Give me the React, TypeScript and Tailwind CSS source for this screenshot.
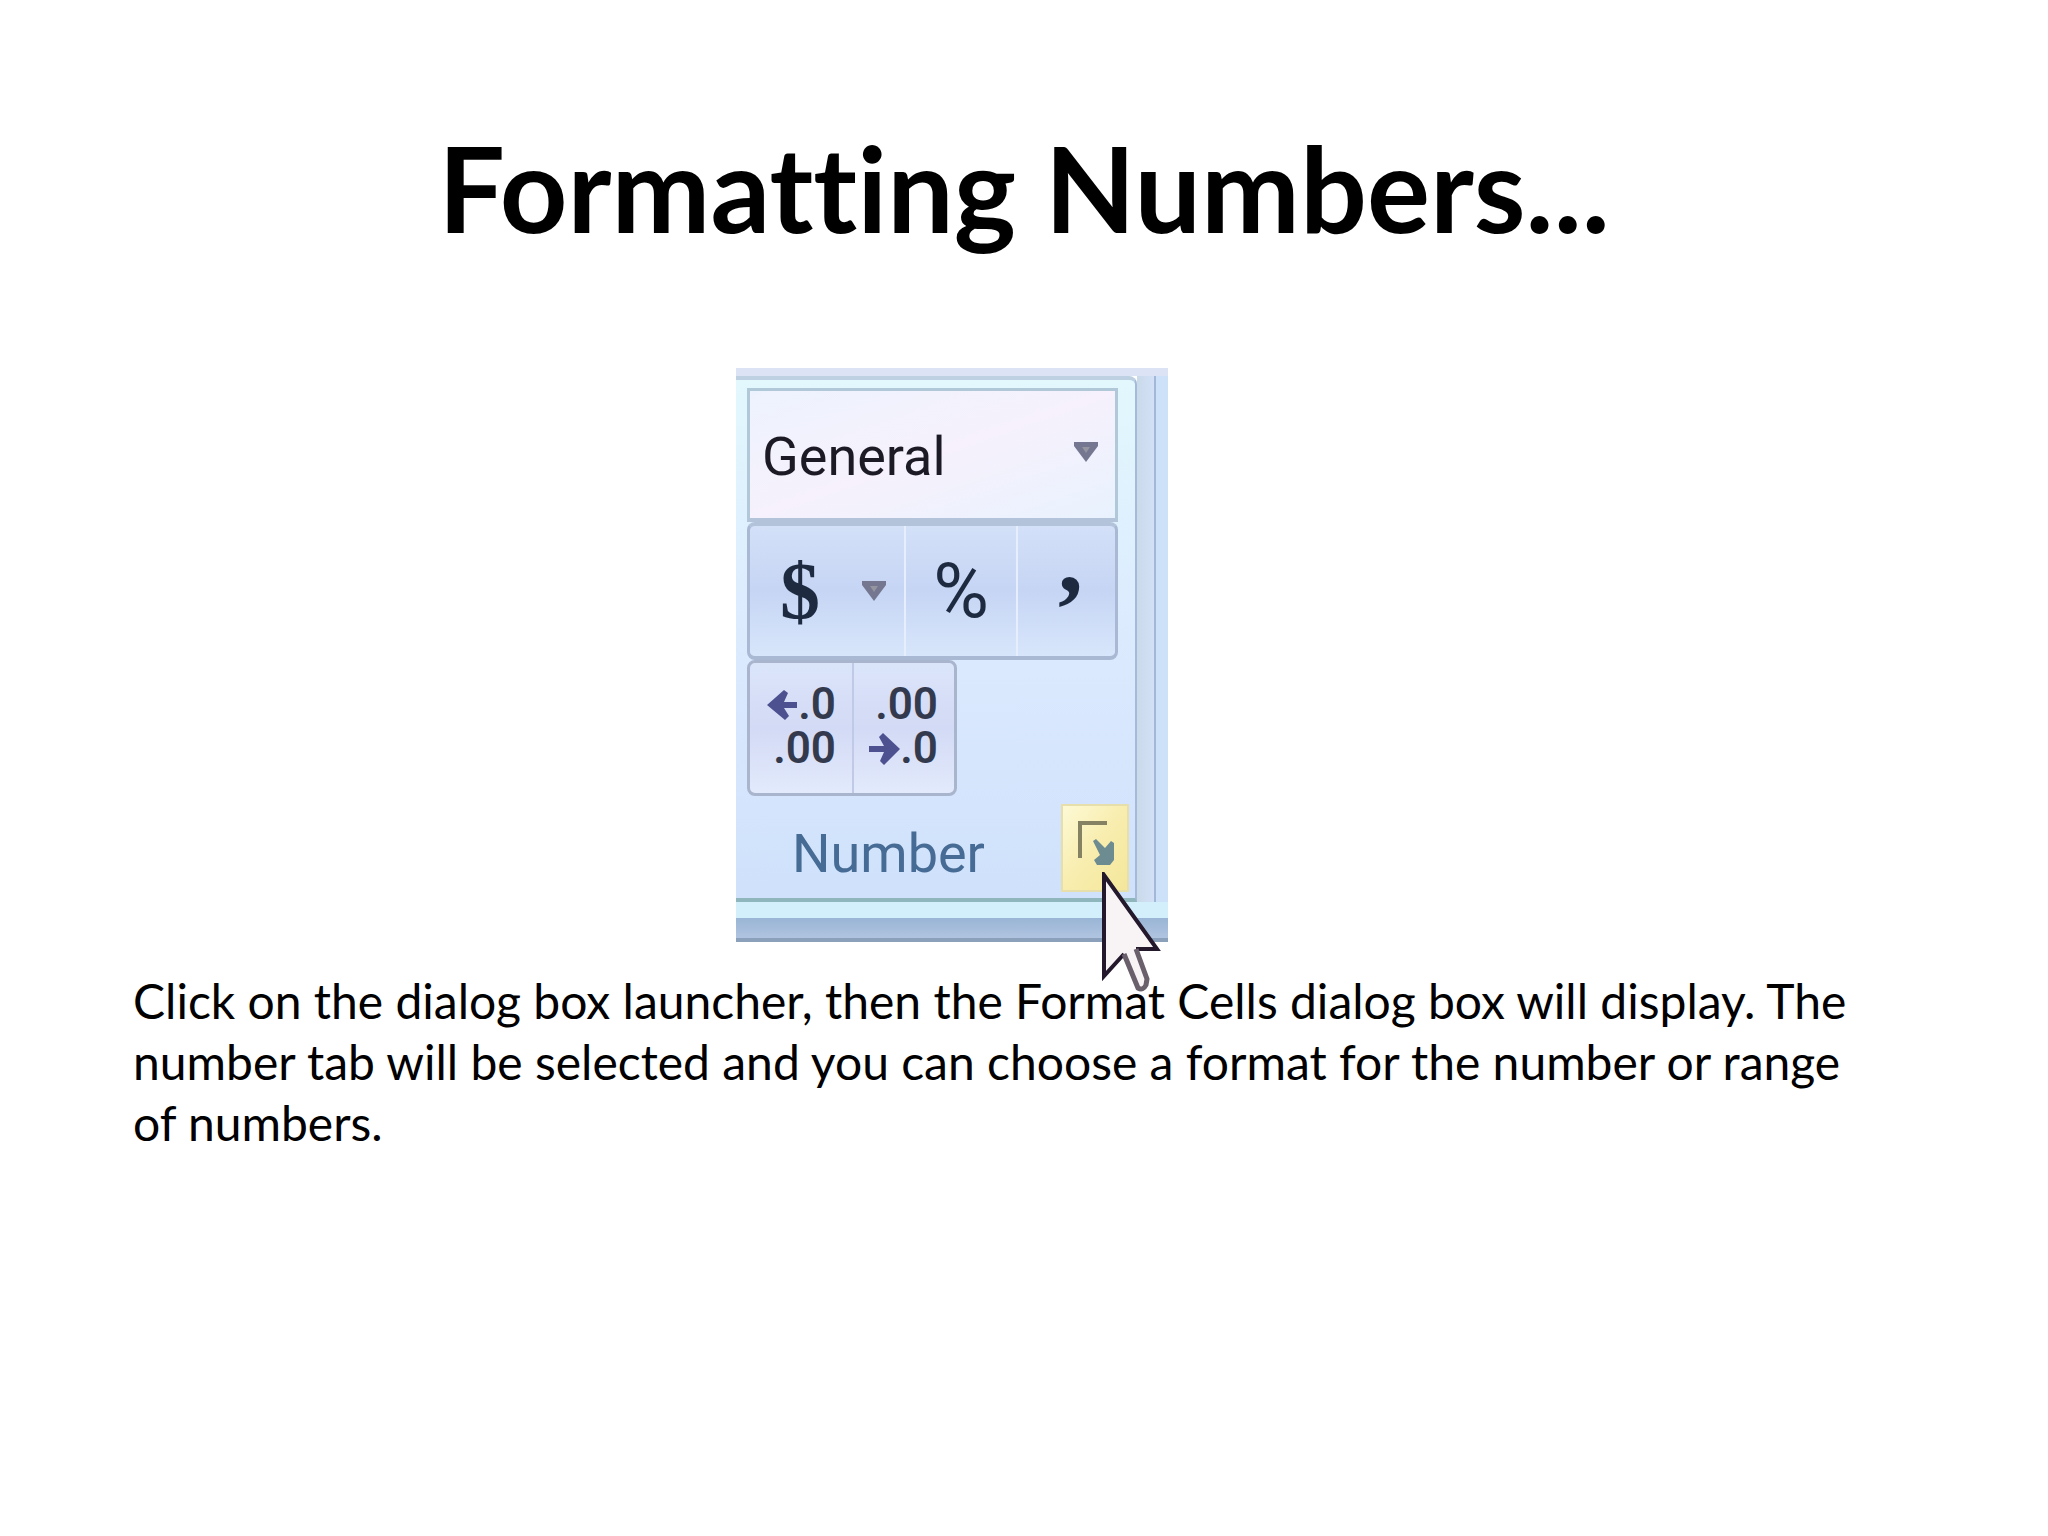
import { useState } from "react";

const FORMATS = ["General", "Number", "Currency", "Accounting", "Percentage"];

function Arrow({ className }: { className: string }) {
  return (
    <svg viewBox="0 0 24 20" className={className} aria-hidden="true">
      <path d="M0 0h24v4l-12 16L0 4z" fill="#74778f" />
      <path d="M8 5h8l-4 6z" fill="#94959f" />
    </svg>
  );
}

function SmallArrow({ left }: { left?: boolean }) {
  return (
    <svg viewBox="0 0 32 38" className="w-8 h-[38px]" aria-hidden="true">
      {left
        ? <path d="M1 20L18 5l4 3-4 9h13v6H18l5 8-4 4z" fill="#4d5190" />
        : <path d="M32 20L16 36l-4-4 4-9H1v-6h15l-5-9 4-4z" fill="#4d5190" />}
    </svg>
  );
}

function Cursor() {
  return (
    <svg viewBox="0 0 60 122" className="absolute left-[38px] top-[66px] w-[60px] h-[122px] pointer-events-none" aria-hidden="true">
      <path d="M3 3v101l20-22 14 34q5 3 8-3l1-6-11-30h21z" fill="#f8f4f6" />
      <path d="M35 77h21L3 3v101l20-22" fill="none" stroke="#24182c" strokeWidth="4" />
      <path d="M23 82l14 34q5 3 8-3l1-6-11-30" fill="none" stroke="#6a606c" strokeWidth="5" />
    </svg>
  );
}

function NumberGroup() {
  const [format, setFormat] = useState("General");

  return (
    <section aria-label="Number" className="w-[432px] font-[Roboto,sans-serif]">
      <div className="h-2 bg-[#dce3f5]" />
      <div className="flex">
        <div className="flex-1 border-t-4 border-r-2 border-b-4 border-t-[#bdd1e2] border-r-[#a5b9d8] border-b-[#8fb5bd] rounded-tr-lg bg-linear-to-b from-[#e2f8fd] via-[#dceafe] to-[#cfe1fb]">
          <div className="flex flex-col pl-[11px] pr-[17px] pt-2">
            <div className="relative h-[134px]">
              <select aria-label="Number format" value={format} onChange={(e) => setFormat(e.target.value)} className="appearance-none w-full h-full pl-3 pt-1 border-3 border-b-4 border-[#b0c8d8] border-b-[#b3c3da] bg-linear-to-br from-[#edf3fe] via-[#f6f1fc] to-[#e8f2fe] text-[54px] text-[#1c1b25]">
                {FORMATS.map((f) => <option key={f}>{f}</option>)}
              </select>
              <Arrow className="absolute right-5 top-[54px] w-6 h-5 pointer-events-none" />
            </div>
            <div className="flex h-[138px] border-3 border-t-4 border-b-4 border-[#a9b8d3] border-t-[#b3c3da] rounded-lg bg-linear-to-b from-[#d3e0f8] via-[#c6d5f4] to-[#d8e6fb] text-[#1d2a40]">
              <button aria-label="Accounting format" className="w-[156px] flex items-center gap-[42px] pl-[30px] border-r-2 border-[#e6eefb]">
                <span className="font-['Liberation_Serif',serif] font-bold text-[80px] leading-[96px]">$</span>
                <Arrow className="w-6 h-5" />
              </button>
              <button aria-label="Percent style" className="w-[112px] border-r-2 border-[#e6eefb] text-[76px] leading-[96px]">%</button>
              <button aria-label="Comma style" className="flex-1 flex items-start justify-center pb-16 pl-2 font-['Liberation_Serif',serif] font-bold text-[100px] leading-[66px]">,</button>
            </div>
            <div className="flex w-[210px] h-[136px] border-3 border-[#a9b4cd] rounded-lg bg-linear-to-b from-[#dbe5fa] via-[#d3daf5] to-[#e2eafc] text-[44px] leading-[44px] font-semibold text-[#343a4e]">
              <button aria-label="Increase decimal" className="w-[104px] border-r-2 border-[#c0cae6] flex flex-col items-end justify-center pr-4 pb-1">
                <span className="flex items-center"><SmallArrow left />.0</span>
                <span>.00</span>
              </button>
              <button aria-label="Decrease decimal" className="flex-1 flex flex-col items-end justify-center pr-4 pb-1">
                <span>.00</span>
                <span className="flex items-center"><SmallArrow />.0</span>
              </button>
            </div>
          </div>
          <div className="flex justify-between mt-2 h-[94px] pl-[56px] pr-[6px]">
            <span className="text-[54px] leading-[100px] text-[#466b94]">Number</span>
            <button aria-label="Format Cells" className="relative w-[68px] h-[88px] border-2 border-[#e6dfac] bg-linear-to-br from-[#fdf9d5] via-[#f8edae] to-[#f4e79b] z-10">
              <svg viewBox="0 0 68 88" className="absolute -left-[2px] -top-[2px] w-[68px] h-[88px]" aria-hidden="true">
                <path d="M19 54V19h27" fill="none" stroke="#858163" strokeWidth="4" />
                <path d="M32 37l3-2 9 9 6-7 3 2v17l-4 5H36l-3-5 6-5z" fill="#6d8c91" />
              </svg>
              <Cursor />
            </button>
          </div>
        </div>
        <div className="w-[19px] border-r-2 border-[#a1b8d7] bg-linear-to-r from-[#c9dae9] to-[#d3e0f7]" />
        <div className="w-[12px] bg-[#cde2f9]" />
      </div>
      <div className="h-4 bg-[#d3effb]" />
      <div className="h-6 border-b-4 border-[#8ba0bb] bg-linear-to-b from-[#99b5d5] to-[#b0c4e0]" />
    </section>
  );
}

export default function App() {
  return (
    <main className="min-h-screen bg-white text-black font-[Lato,sans-serif] [font-variant-ligatures:none] pt-[120px]">
      <h1 className="text-center text-[118px] leading-[136px] font-bold">Formatting Numbers...</h1>
      <div className="flex justify-center mt-[112px] pr-36">
        <NumberGroup />
      </div>
      <p className="relative z-20 mt-7 pl-[133px] pr-[190px] text-[48px] leading-[61px]">
        Click on the dialog box launcher, then the Format Cells dialog box will display. The number tab will be selected and you can choose a format for the number or range of numbers.
      </p>
    </main>
  );
}
